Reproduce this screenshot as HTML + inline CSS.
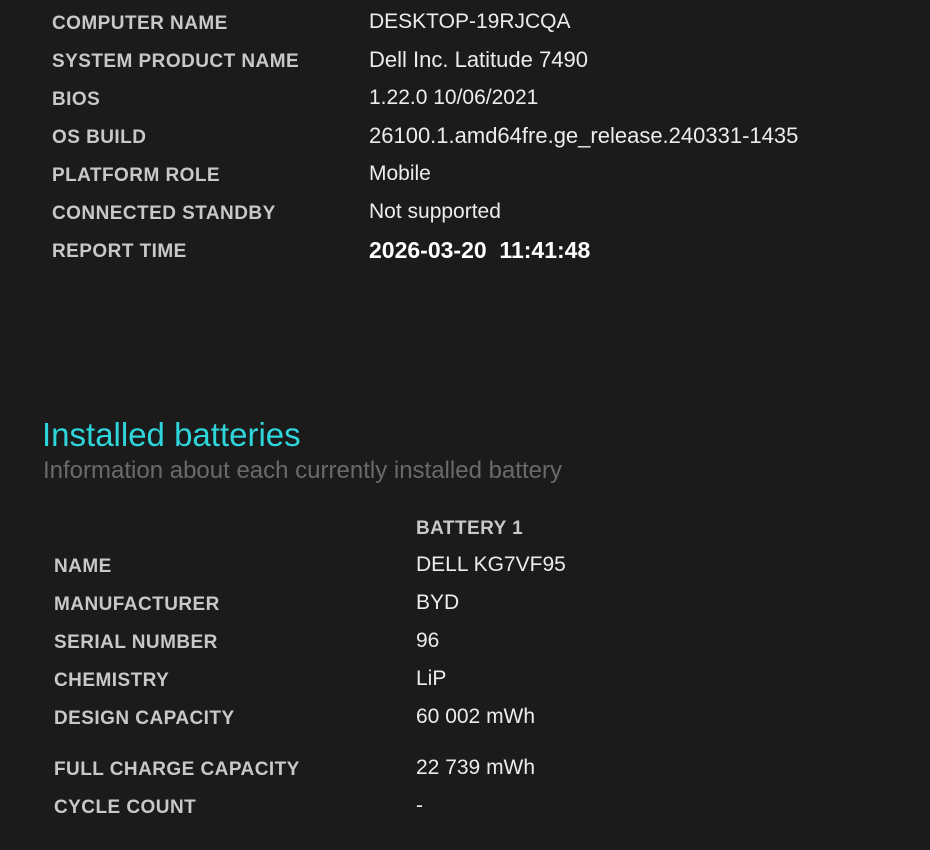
<!DOCTYPE html>
<html><head><meta charset="utf-8"><style>
html,body{margin:0;padding:0;background:#1b1b1b;width:930px;height:850px;overflow:hidden;font-family:"Liberation Sans",sans-serif}
.r{position:absolute;left:0;width:930px;height:38px}
.l{position:absolute;font-weight:bold;font-size:19px;letter-spacing:0.45px;color:#c8c8c8;line-height:38px;top:2px}
.v{position:absolute;font-size:21px;color:#ececec;line-height:38px;top:0}
</style></head><body>
<div class="r" style="top:3px"><span class="l" style="left:52px">COMPUTER NAME</span><span class="v" style="left:369px">DESKTOP-19RJCQA</span></div>
<div class="r" style="top:41px"><span class="l" style="left:52px">SYSTEM PRODUCT NAME</span><span class="v" style="left:369px;font-size:22px">Dell Inc. Latitude 7490</span></div>
<div class="r" style="top:79px"><span class="l" style="left:52px">BIOS</span><span class="v" style="left:369px">1.22.0 10/06/2021</span></div>
<div class="r" style="top:117px"><span class="l" style="left:52px">OS BUILD</span><span class="v" style="left:369px;font-size:22px">26100.1.amd64fre.ge_release.240331-1435</span></div>
<div class="r" style="top:155px"><span class="l" style="left:52px">PLATFORM ROLE</span><span class="v" style="left:369px">Mobile</span></div>
<div class="r" style="top:193px"><span class="l" style="left:52px">CONNECTED STANDBY</span><span class="v" style="left:369px">Not supported</span></div>
<div class="r" style="top:231px"><span class="l" style="left:52px">REPORT TIME</span><span class="v" style="left:369px;color:#fff;font-weight:bold;font-size:23px">2026-03-20&nbsp; 11:41:48</span></div>

<div style="position:absolute;left:42px;top:415px;font-size:33px;color:#2ed6dc;line-height:40px">Installed batteries</div>
<div style="position:absolute;left:43px;top:456px;font-size:24px;color:#6a6a6a;line-height:30px">Information about each currently installed battery</div>

<div class="r" style="top:508px"><span class="l" style="left:416px">BATTERY 1</span></div>
<div class="r" style="top:546px"><span class="l" style="left:54px">NAME</span><span class="v" style="left:416px">DELL KG7VF95</span></div>
<div class="r" style="top:584px"><span class="l" style="left:54px">MANUFACTURER</span><span class="v" style="left:416px">BYD</span></div>
<div class="r" style="top:622px"><span class="l" style="left:54px">SERIAL NUMBER</span><span class="v" style="left:416px">96</span></div>
<div class="r" style="top:660px"><span class="l" style="left:54px">CHEMISTRY</span><span class="v" style="left:416px">LiP</span></div>
<div class="r" style="top:698px"><span class="l" style="left:54px">DESIGN CAPACITY</span><span class="v" style="left:416px">60 002 mWh</span></div>
<div class="r" style="top:749px"><span class="l" style="left:54px">FULL CHARGE CAPACITY</span><span class="v" style="left:416px">22 739 mWh</span></div>
<div class="r" style="top:787px"><span class="l" style="left:54px">CYCLE COUNT</span><span class="v" style="left:416px">-</span></div>
</body></html>
